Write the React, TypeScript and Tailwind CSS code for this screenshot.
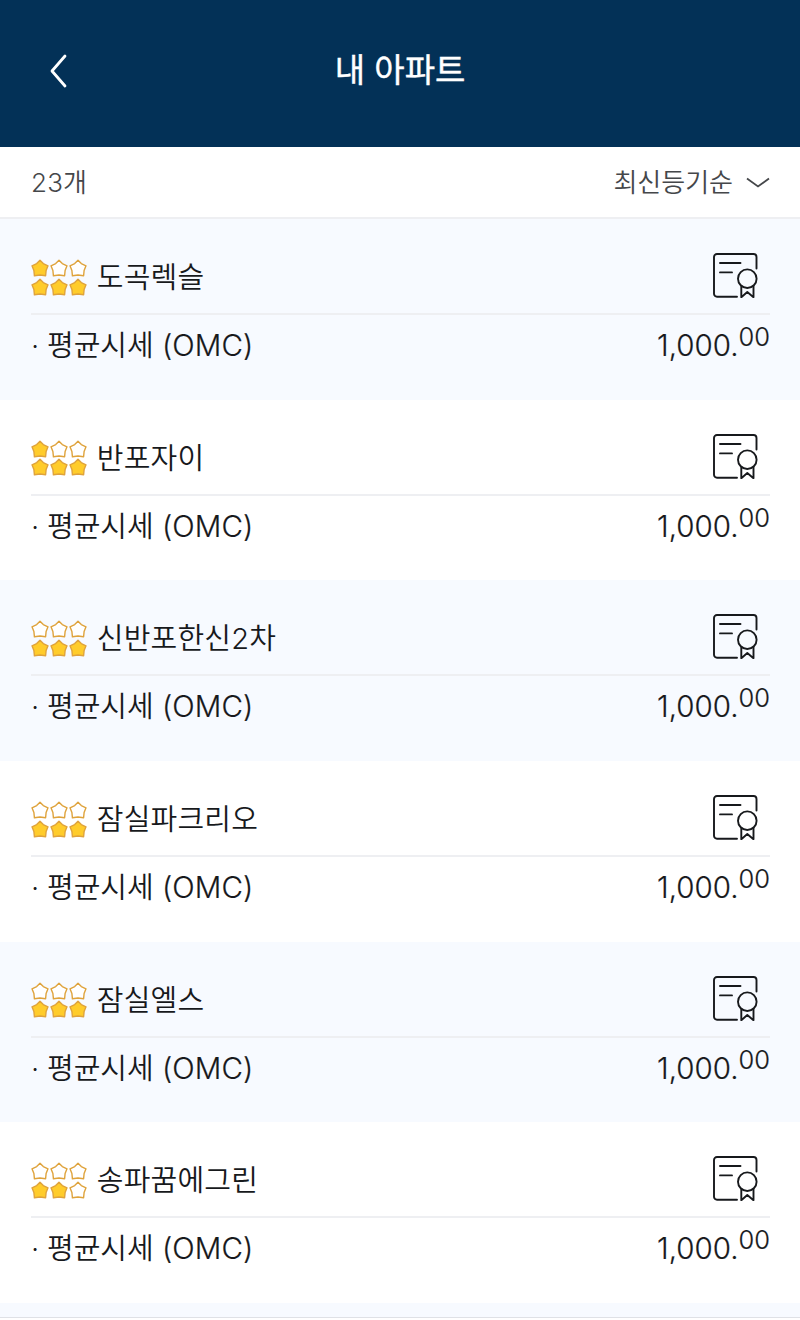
interface Apartment {
  name: string;
  stars: boolean[];
}

const apartments: Apartment[] = [
  { name: '도곡렉슬', stars: [true, false, false, true, true, true] },
  { name: '반포자이', stars: [true, false, false, true, true, true] },
  { name: '신반포한신2차', stars: [false, false, false, true, true, true] },
  { name: '잠실파크리오', stars: [false, false, false, true, true, true] },
  { name: '잠실엘스', stars: [false, false, false, true, true, true] },
  { name: '송파꿈에그린', stars: [false, false, false, true, true, false] },
];

const Star = ({ filled }: { filled: boolean }) => (
  <svg viewBox="0 0 18 18" className="block size-[18px]">
    <path
      d="M9 1.2 12.3 4.6 17 6.8 15.1 11.5 14.6 16.8 9 16 3.4 16.8 2.9 11.5 1 6.8 5.7 4.6Z"
      fill={filled ? '#ffcc2b' : '#ffffff'}
      stroke="#dfa33c"
      strokeWidth="1.4"
      strokeLinejoin="round"
    />
  </svg>
);

const CertificateIcon = () => (
  <svg
    viewBox="0 0 46 46"
    className="block size-[46px]"
    fill="none"
    stroke="#17191c"
    strokeWidth="1.9"
    strokeLinecap="round"
    strokeLinejoin="round"
  >
    <path d="M25 44.7H5a3 3 0 0 1-3-3V5a3 3 0 0 1 3-3h36.5a3 3 0 0 1 3 3v11.5" />
    <path d="M8 11h20.5M8 20.4h12" />
    <circle cx="35.3" cy="26.7" r="9.3" />
    <path d="M29.3 34.3v10.9l6-5.2 6.2 5.2V34.3" />
  </svg>
);

const ApartmentRow = ({ name, stars }: Apartment) => (
  <li className="h-[180.7px] shrink-0 pr-[30px] pl-[31px] odd:bg-[#f7faff] even:bg-white">
    <div className="flex h-24 items-start justify-between border-b-2 border-[#eeeff2] pt-[33px] pr-3">
      <div className="flex items-start">
        <div className="mt-[7px] grid grid-cols-3 gap-x-[0.9px] gap-y-[0.6px]">
          {stars.map((filled, i) => (
            <Star key={i} filled={filled} />
          ))}
        </div>
        <h2 className="mt-[6px] ml-[10px] text-[29px] leading-[40px] tracking-[0.2px]">{name}</h2>
      </div>
      <CertificateIcon />
    </div>
    <div className="flex items-start justify-between pt-[10px] text-[29px] leading-[40px]">
      <p className="mt-px flex">
        <span className="w-4">·</span>
        평균시세&nbsp;
        <span className="-mt-px text-[29.5px] tracking-[0.1px] [-webkit-text-stroke:0.2px]">(OMC)</span>
      </p>
      <p className="flex [-webkit-text-stroke:0.2px]">
        <span className="text-[29.5px]">1,000.</span>
        <span className="-mt-2 text-[25.5px]">00</span>
      </p>
    </div>
  </li>
);

const App = () => (
  <main className="flex h-[1320px] w-[800px] flex-col overflow-hidden bg-white font-['Inter','Noto_Sans_CJK_KR',sans-serif] font-[350] text-[#17191c]">
    <header className="grid h-[147px] shrink-0 grid-cols-3 items-center bg-[#033157] px-[48px] pb-[5px] text-white">
      <button type="button" aria-label="뒤로">
        <svg
          viewBox="0 0 20 36"
          className="block h-9 w-5"
          fill="none"
          stroke="currentColor"
          strokeWidth="2.8"
          strokeLinecap="round"
          strokeLinejoin="round"
        >
          <path d="M17 3 4 18l13 15" />
        </svg>
      </button>
      <h1 className="pb-[3px] text-center text-[33px] leading-[48px] font-normal whitespace-nowrap [-webkit-text-stroke:0.4px]">
        내 아파트
      </h1>
    </header>

    <div className="flex h-[72px] shrink-0 items-center justify-between border-b-2 border-[#eeeff2] pt-px pr-[29px] pl-[31px] text-[26px] text-[#45474a]">
      <span className="tracking-[0.2px]">23개</span>
      <button type="button" className="flex items-center gap-[12px]">
        최신등기순
        <svg viewBox="0 0 26 14" className="block h-[14px] w-[26px]" fill="none" stroke="currentColor" strokeWidth="1.8">
          <path d="m2 2.5 11 8 11-8" />
        </svg>
      </button>
    </div>

    <ul className="flex flex-col">
      {apartments.map((apartment) => (
        <ApartmentRow key={apartment.name} {...apartment} />
      ))}
    </ul>
    <div className="h-[15px] shrink-0 border-b border-[#dfe1e6] bg-[#f7faff]" />
  </main>
);

export default App;
